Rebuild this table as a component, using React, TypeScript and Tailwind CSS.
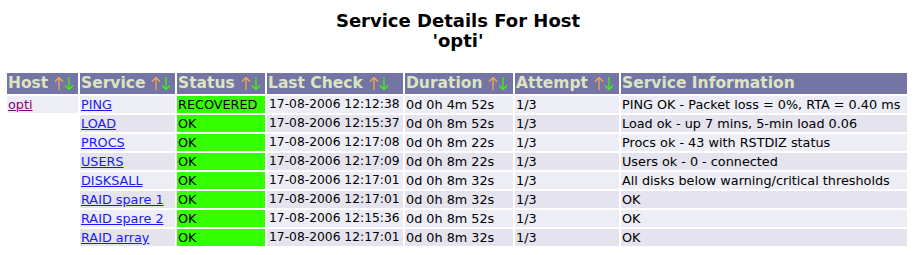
import React from 'react';

type Row = {
  host: string;
  service: string;
  status: string;
  lastCheck: string;
  duration: string;
  attempt: string;
  info: string;
};

const ROWS: Row[] = [
  { host: 'opti', service: 'PING', status: 'RECOVERED', lastCheck: '17-08-2006 12:12:38', duration: '0d 0h 4m 52s', attempt: '1/3', info: 'PING OK - Packet loss = 0%, RTA = 0.40 ms' },
  { host: '', service: 'LOAD', status: 'OK', lastCheck: '17-08-2006 12:15:37', duration: '0d 0h 8m 52s', attempt: '1/3', info: 'Load ok - up 7 mins, 5-min load 0.06' },
  { host: '', service: 'PROCS', status: 'OK', lastCheck: '17-08-2006 12:17:08', duration: '0d 0h 8m 22s', attempt: '1/3', info: 'Procs ok - 43 with RSTDIZ status' },
  { host: '', service: 'USERS', status: 'OK', lastCheck: '17-08-2006 12:17:09', duration: '0d 0h 8m 22s', attempt: '1/3', info: 'Users ok - 0 - connected' },
  { host: '', service: 'DISKSALL', status: 'OK', lastCheck: '17-08-2006 12:17:01', duration: '0d 0h 8m 32s', attempt: '1/3', info: 'All disks below warning/critical thresholds' },
  { host: '', service: 'RAID spare 1', status: 'OK', lastCheck: '17-08-2006 12:17:01', duration: '0d 0h 8m 32s', attempt: '1/3', info: 'OK' },
  { host: '', service: 'RAID spare 2', status: 'OK', lastCheck: '17-08-2006 12:15:36', duration: '0d 0h 8m 52s', attempt: '1/3', info: 'OK' },
  { host: '', service: 'RAID array', status: 'OK', lastCheck: '17-08-2006 12:17:01', duration: '0d 0h 8m 32s', attempt: '1/3', info: 'OK' },
];

const HEADERS: Array<{ label: string; sort: boolean; w: string }> = [
  { label: 'Host', sort: true, w: 'w-[71px]' },
  { label: 'Service', sort: true, w: 'w-[95px]' },
  { label: 'Status', sort: true, w: 'w-[88px]' },
  { label: 'Last Check', sort: true, w: 'w-[136px]' },
  { label: 'Duration', sort: true, w: 'w-[108px]' },
  { label: 'Attempt', sort: true, w: 'w-[104px]' },
  { label: 'Service Information', sort: false, w: 'w-[286px]' },
];

const SortArrows = () => (
  <span className="inline-flex items-center ml-[6px] align-middle">
    <svg width="10" height="15" viewBox="0 0 10 15" className="text-[#ffaa44]">
      <path d="M5 14V1.5M1 5.5L5 1.5L9 5.5" fill="none" stroke="currentColor" strokeWidth="1.2" />
    </svg>
    <svg width="10" height="15" viewBox="0 0 10 15" className="text-[#33ff00]">
      <path d="M5 1V13.5M1 9.5L5 13.5L9 9.5" fill="none" stroke="currentColor" strokeWidth="1.2" />
    </svg>
  </span>
);

export default function App() {
  return (
    <div className="bg-white w-[916px] h-[255px] font-['DejaVu_Sans',sans-serif] text-black">
      {/* Title */}
      <div className="pt-[11px] text-center text-[18px] font-bold leading-[20px]">
        <div>Service Details For Host</div>
        <div>'opti'</div>
      </div>

      {/* Table */}
      <div className="pt-[20px] pl-[5px]">
        <table className="w-[904px] border-separate border-spacing-[2px] table-fixed">
          <thead>
            <tr>
              {HEADERS.map((h) => (
                <th
                  key={h.label}
                  className={`${h.w} h-[21px] p-0 pl-[1px] text-left whitespace-nowrap overflow-visible bg-[#7575a5] text-[#dce5c1] text-[15.5px] font-bold leading-[21px]`}
                >
                  {h.label}
                  {h.sort && <SortArrows />}
                </th>
              ))}
            </tr>
          </thead>
          <tbody className="text-[12.8px] leading-[17px]">
            {ROWS.map((r, i) => {
              const bg = i % 2 === 0 ? 'bg-[#ededf5]' : 'bg-[#e5e3ee]';
              return (
                <tr key={r.service} className="h-[17px]">
                  <td className={`p-0 pl-[1px] ${r.host ? bg : ''}`}>
                    {r.host && <a href="#" className="text-[#800080] underline">{r.host}</a>}
                  </td>
                  <td className={`p-0 pl-[1px] ${bg}`}>
                    <a href="#" className="text-[#1a1aee] underline">{r.service}</a>
                  </td>
                  <td className="p-0 pl-[1px] bg-[#33ff00]">{r.status}</td>
                  <td className={`p-0 pl-[2px] text-[12.3px] whitespace-nowrap ${bg}`}>{r.lastCheck}</td>
                  <td className={`p-0 pl-[1px] whitespace-nowrap ${bg}`}>{r.duration}</td>
                  <td className={`p-0 pl-[1px] ${bg}`}>{r.attempt}</td>
                  <td className={`p-0 pl-[1px] whitespace-nowrap ${bg}`}>{r.info}</td>
                </tr>
              );
            })}
          </tbody>
        </table>
      </div>
    </div>
  );
}
